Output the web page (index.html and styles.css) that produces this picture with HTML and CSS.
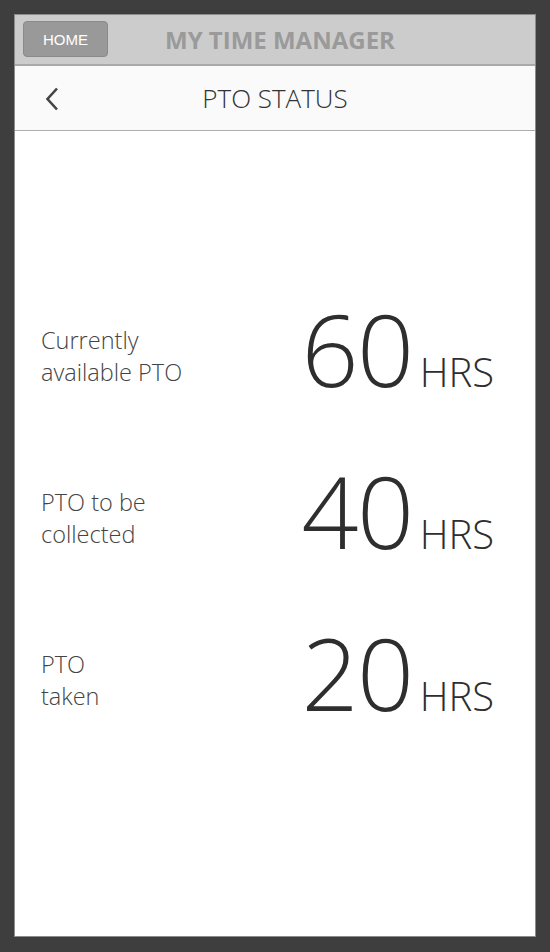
FILE: index.html
```html
<!DOCTYPE html>
<html lang="en">
<head>
    <meta charset="UTF-8">
    <meta name="viewport" content="width=device-width, initial-scale=1.0">
    <title>PTO Status</title>
    <link rel="stylesheet" href="styles.css">
</head>
<body>

    <div class="screen">
        <div class="app-bar">
            <button class="home-btn">HOME</button>
            <span class="app-title">MY TIME MANAGER</span>
        </div>

        <div class="nav-bar">
            <a class="back" href="#">
                <svg width="14" height="24" viewBox="0 0 14 24">
                    <polyline points="12,1.5 2.5,12 12,22.5" fill="none" stroke="#444" stroke-width="2.6"/>
                </svg>
            </a>
            <h1>PTO STATUS</h1>
        </div>

        <div class="content">
            <div class="row">
                <div class="label">Currently<br>available PTO</div>
                <div class="amount">60<span class="unit">HRS</span></div>
            </div>
            <div class="row">
                <div class="label">PTO to be<br>collected</div>
                <div class="amount">40<span class="unit">HRS</span></div>
            </div>
            <div class="row">
                <div class="label">PTO<br>taken</div>
                <div class="amount">20<span class="unit">HRS</span></div>
            </div>
        </div>
    </div>

</body>
</html>
```

FILE: styles.css
```css
body {
    margin: 0;
    background-color: #3e3e3e;
    font-family: 'Open Sans', sans-serif;
}

.screen {
    margin: 14px 14px 15px 14px;
    height: 921px;
    border: 1px solid #8c8c8c;
    background-color: #fff;
    display: flex;
    flex-direction: column;
}

.app-bar {
    height: 49px;
    background-color: #cccccc;
    border-bottom: 2px solid #a9a9a9;
    display: flex;
    align-items: center;
    padding-left: 8px;
}

.home-btn {
    width: 85px;
    height: 36px;
    margin-top: -1px;
    background-color: #999;
    border: 1px solid #8a8a8a;
    border-radius: 4px;
    color: #fff;
    font-family: 'Liberation Sans', Arial, sans-serif;
    font-size: 15px;
    padding: 0;
}

.app-title {
    margin-left: 57px;
    font-size: 24px;
    font-weight: bold;
    color: #9a9a9a;
}

.nav-bar {
    height: 64px;
    background-color: #fafafa;
    border-bottom: 1px solid #adadad;
    display: flex;
    align-items: center;
    position: relative;
}

.back {
    display: flex;
    margin-left: 30px;
    margin-top: 1px;
}

.nav-bar h1 {
    position: absolute;
    left: 0;
    right: 0;
    margin: 0;
    text-align: center;
    font-size: 26px;
    font-weight: 300;
    color: #333;
    pointer-events: none;
}

.content {
    padding: 179px 41px 0 26px;
    display: flex;
    flex-direction: column;
    gap: 62px;
}

.row {
    display: flex;
    justify-content: space-between;
    align-items: center;
    height: 100px;
}

.label {
    font-size: 23.5px;
    font-weight: 300;
    line-height: 32px;
    color: #444;
    padding-bottom: 8px;
}

.amount {
    font-size: 100px;
    font-weight: 300;
    line-height: 100px;
    color: #2e2e2e;
    letter-spacing: -1.5px;
}

.unit {
    font-size: 40px;
    letter-spacing: 0;
    margin-left: 7px;
}
```
